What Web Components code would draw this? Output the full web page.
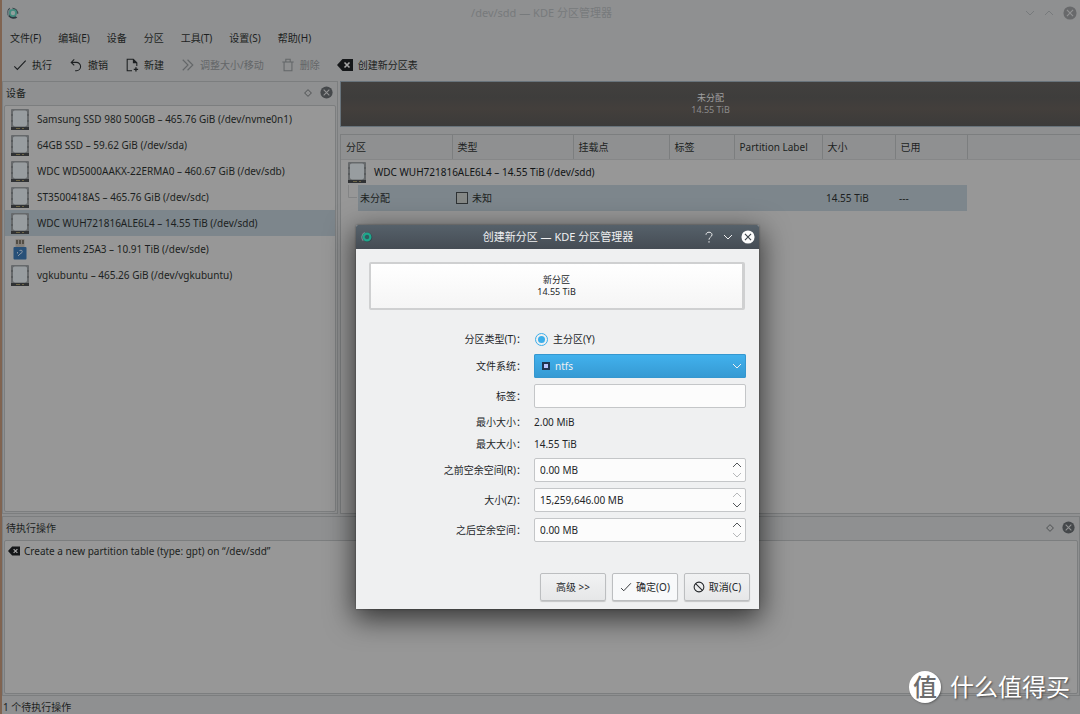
<!DOCTYPE html>
<html lang="zh-CN">
<head>
<meta charset="utf-8">
<title>KDE 分区管理器</title>
<style>
  body {
    margin: 0;
    background: #8f9091;
    color: #1c1f21;
    font: 10px/16px "Noto Sans", "Noto Sans CJK SC", sans-serif;
    overflow: hidden;
    --window: #8f9091;
    --view: #979797;
    --line: #7c7e7f;
    --selected: #7d868c;
    --muted: #636668;
  }
</style>
</head>
<body>
<partition-manager></partition-manager>
<script>
const icons = {
  app: ['0 0 16 16', '<path d="M4 2A7 7 0 0 0 13 13L10 11A4 4 0 0 1 5 5Z" fill="#2c3940"/><path d="M3 12A7 7 0 0 1 4 3L6 5Z" fill="#6f7c80"/><path d="M7 2A6.500 6.500 0 0 1 14 9L11 8Z" fill="#3c494d"/><circle cx="8" cy="8" r="3.500" fill="#8fa09d" stroke="#438b7e" stroke-width="2"/>'],
  appLit: ['0 0 16 16', '<circle cx="8.500" cy="8.500" r="6.500" fill="#34444d"/><path d="M3 13A7 7 0 0 1 5 2" stroke="#7c8a92" stroke-width="1.500" fill="none"/><circle cx="8" cy="8" r="4.500" fill="#315d60" stroke="#1fa88c" stroke-width="3"/>'],
  check: ['0 0 16 16', '<path d="M1.500 9.500 5 13 14.500 3" fill="none" stroke="currentColor" stroke-width="1.200"/>'],
  undo: ['0 0 16 16', '<path d="M6 1.500 2.500 5 6 8.500M2.500 5H8.500A4.500 4.500 0 0 1 8.500 14.500H7" fill="none" stroke="currentColor" stroke-width="1.200"/>'],
  file: ['0 0 16 16', '<path d="M8 14.500H2.500V1.500H9.500L13.500 5.500V9" fill="none" stroke="currentColor" stroke-width="1.200"/><path d="M9 1V6H14Z" fill="currentColor"/><path d="M12.500 10.500V15.500M10 13H15" stroke="currentColor" stroke-width="1.500"/>'],
  resize: ['0 0 16 16', '<path d="M2 2 8 8 2 14M7.500 2 13.500 8 7.500 14" fill="none" stroke="currentColor" stroke-width="1.300"/>'],
  trash: ['0 0 16 16', '<path d="M1.500 4.500H14.500M5.500 4V1.500H10.500V4M3.500 5V14.500H12.500V5" fill="none" stroke="currentColor" stroke-width="1.200"/>'],
  clear: ['0 0 16 16', '<path d="M5.500 2H16V14H5.500L0 8Z" fill="#151719"/><path d="M7.500 5.500 12.500 10.500M12.500 5.500 7.500 10.500" stroke="#a8a8a8" stroke-width="1.600"/>'],
  diamond: ['0 0 16 16', '<path d="M8 3.500 12.500 8 8 12.500 3.500 8Z" fill="none" stroke="currentColor" stroke-width="1.300"/>'],
  close: ['0 0 16 16', '<circle cx="8" cy="8" r="7.500" fill="currentColor"/><path d="M4.500 4.500 11.500 11.500M11.500 4.500 4.500 11.500" stroke="var(--cross, #929394)" stroke-width="1.300"/>'],
  down: ['0 0 10 10', '<path d="M1 3 5 7 9 3" fill="none" stroke="currentColor" stroke-width="1"/>'],
  up: ['0 0 10 10', '<path d="M1 7 5 3 9 7" fill="none" stroke="currentColor" stroke-width="1"/>'],
  help: ['0 0 16 16', '<path d="M4 5C4 .5 12 .5 12 5C12 8 8 8 8 11.500M8 13.500V15.500" fill="none" stroke="currentColor" stroke-width="1.300"/>'],
  cancel: ['0 0 16 16', '<circle cx="8" cy="8" r="6.500" fill="none" stroke="currentColor" stroke-width="1.400"/><path d="M3.500 3.500 12.500 12.500" stroke="currentColor" stroke-width="1.400"/>'],
  disk: ['0 0 18 21', '<rect width="18" height="21" rx="1" fill="#66696b"/><rect y="18" width="18" height="3" fill="#303234"/><path d="M4 1.500H14Q16.500 1.500 16 4V14Q16.500 17 14 17.500H4Q1.500 17 2 14V4Q1.500 1.500 4 1.500Z" fill="#989da0"/><path d="M1 5V7M1 11V13M17 5V7M17 11V13" stroke="#4b4e50" stroke-width="1"/><path d="M5 19.500H9M11 19.500H13" stroke="#6d6547" stroke-width="1"/>'],
  usb: ['0 0 18 21', '<path d="M4.500 0H13.500V9H4.500Z" fill="#85807a"/><path d="M6 1V5M9 1V5M12 1V5" stroke="#423d35" stroke-width="1.500"/><rect x="2.500" y="8" width="13" height="12.500" rx="1" fill="#285078"/><path d="M7 17 9 15M8.500 11.500Q12 10.500 11 13.500L9 15M6.500 13V14.500" fill="none" stroke="#8997a5" stroke-width="1"/>']
};

function define(name, html, setup) {
  const template = document.createElement('template');
  template.innerHTML = '<style>*{box-sizing:border-box}button,input,select{font:inherit;color:inherit;margin:0}button{background:none;border:0;padding:0}</style>' + html;
  customElements.define(name, class extends HTMLElement {
    constructor() {
      super();
      this.attachShadow({ mode: 'open' }).append(template.content.cloneNode(true));
    }
    connectedCallback() { if (setup) setup(this, this.shadowRoot); }
  });
}

define('k-icon', `<style>
  :host{display:inline-flex;flex:none;width:12px;height:12px}
  svg{width:100%;height:100%;display:block}
</style><svg aria-hidden="true"></svg>`, (host, root) => {
  const [box, body] = icons[host.getAttribute('name')];
  const svg = root.querySelector('svg');
  svg.setAttribute('viewBox', box);
  svg.innerHTML = body;
});

define('title-bar', `<style>
  :host{display:grid;grid-template-columns:60px 1fr 60px;align-items:center;height:25px;padding:0 3px 0 4px;color:#777a7c;font-size:11px}
  .app{width:14px;height:14px}
  h1{margin:0;font-size:inherit;font-weight:400;text-align:center}
  .controls{display:flex;gap:9px;justify-content:flex-end;align-items:center}
  button{display:flex}
  .small{width:10px;height:10px}
  .close{width:14px;height:14px;color:#68696b}
</style>
<k-icon class="app" name="app"></k-icon>
<h1>/dev/sdd — KDE 分区管理器</h1>
<div class="controls">
  <button aria-label="最小化"><k-icon class="small" name="down"></k-icon></button>
  <button aria-label="最大化"><k-icon class="small" name="up"></k-icon></button>
  <button aria-label="关闭"><k-icon class="close" name="close"></k-icon></button>
</div>`);

define('menu-bar', `<style>
  :host{display:flex;gap:17px;align-items:center;height:26px;padding-left:8px}
</style>
<button>文件(F)</button><button>编辑(E)</button><button>设备</button><button>分区</button><button>工具(T)</button><button>设置(S)</button><button>帮助(H)</button>`);

define('tool-button', `<style>
  :host{display:block}
  button{display:flex;align-items:center;gap:5px}
  :host([disabled]) button{color:var(--muted)}
</style><button><span><slot></slot></span></button>`, (host, root) => {
  const button = root.querySelector('button');
  button.disabled = host.hasAttribute('disabled');
  const icon = document.createElement('k-icon');
  icon.setAttribute('name', host.getAttribute('icon'));
  icon.style.width = icon.style.height = host.getAttribute('icon') === 'clear' ? '16px' : '14px';
  button.prepend(icon);
});

define('tool-row', `<style>
  :host{display:flex;gap:17px;align-items:center;box-sizing:border-box;height:30px;padding:0 0 2px 11px}
</style>
<tool-button icon="check">执行</tool-button>
<tool-button icon="undo">撤销</tool-button>
<tool-button icon="file">新建</tool-button>
<tool-button icon="resize" disabled>调整大小/移动</tool-button>
<tool-button icon="trash" disabled>删除</tool-button>
<tool-button icon="clear">创建新分区表</tool-button>`);

define('dock-panel', `<style>
  :host{display:flex;flex-direction:column;border:1px solid var(--line);padding:0 1px 1px}
  header{display:flex;align-items:center;height:23px;padding:0 3px 2px 2px}
  h2{margin:0 auto 0 0;font-size:inherit;font-weight:400}
  button{display:flex;margin-left:6px}
  .float{width:12px;height:12px;color:#4b4e50}
  .close{width:13px;height:13px;color:#45484b}
  .view{flex:1;background:var(--view);border:1px solid var(--line);border-radius:2px}
</style>
<header><h2></h2>
  <button aria-label="浮动"><k-icon class="float" name="diamond"></k-icon></button>
  <button aria-label="关闭"><k-icon class="close" name="close"></k-icon></button>
</header>
<div class="view"><slot></slot></div>`, (host, root) => {
  root.querySelector('h2').textContent = host.getAttribute('heading');
});

define('device-item', `<style>
  :host{display:flex;align-items:center;gap:8px;height:26px;padding-left:6px}
  :host([selected]){background:var(--selected)}
  k-icon{width:18px;height:21px}
</style><span><slot></slot></span>`, (host, root) => {
  const icon = document.createElement('k-icon');
  icon.setAttribute('name', host.getAttribute('icon') || 'disk');
  root.querySelector('span').before(icon);
});

define('partition-bar', `<style>
  :host{display:flex;flex-direction:column;justify-content:center;align-items:center;height:46px;font-size:9px;line-height:12px;
    color:#8c8c8c;border:1px solid #68737b;border-right:0;background:linear-gradient(#42403e,#3e3d3c 35%,#433f3c 60%,#3c3b3a)}
  b{font-weight:400;color:#a0a0a0}
</style><b>未分配</b><span>14.55 TiB</span>`);

define('partition-table', `<style>
  :host{display:block;background:var(--view);border:1px solid var(--line);border-right:0}
  table{width:100%;table-layout:fixed;border-collapse:collapse}
  th,td{padding:0 0 0 4px;text-align:left;font-weight:400;white-space:nowrap}
  thead tr{height:24px;background:var(--window)}
  th{border-right:1px solid var(--line);border-bottom:1px solid #868788;padding-left:5px}
  th:last-child{border-right:0}
  tbody tr{height:26px}
  .device{padding-left:7px;color:#111416}
  .line{display:flex;align-items:center;gap:8px}
  .line.first{gap:2px}
  .line.type{gap:4px}
  .disk{width:18px;height:21px}
  .selected td{background:var(--selected)}
  .selected td:first-child{padding-left:0;background:linear-gradient(90deg,transparent 17px,var(--selected) 17px)}
  .selected td:last-child{background:none}
  .box{width:12px;height:12px;background:#858886;border:1px solid #2e3234}
  .branch{flex:none;width:17px;height:26px}
</style>
<table>
  <colgroup><col style="width:111px"><col style="width:121px"><col style="width:96px"><col style="width:65px"><col style="width:88px"><col style="width:73px"><col style="width:72px"><col></colgroup>
  <thead><tr><th>分区</th><th>类型</th><th>挂载点</th><th>标签</th><th>Partition Label</th><th>大小</th><th>已用</th><th></th></tr></thead>
  <tbody>
    <tr><td class="device" colspan="8"><div class="line"><k-icon class="disk" name="disk"></k-icon>WDC WUH721816ALE6L4 – 14.55 TiB (/dev/sdd)</div></td></tr>
    <tr class="selected"><td><div class="line first"><svg class="branch" viewBox="0 0 17 26" aria-hidden="true"><path d="M7.500 0V12.500H16" fill="none" stroke="#838485"/></svg>未分配</div></td>
      <td><div class="line type"><span class="box"></span>未知</div></td><td></td><td></td><td></td><td>14.55 TiB</td><td>---</td><td></td></tr>
  </tbody>
</table>`);

define('pending-item', `<style>
  :host{display:flex;align-items:center;gap:4px;height:20px;padding-left:3px}
</style><k-icon name="clear"></k-icon><span><slot></slot></span>`);

define('spin-box', `<style>
  :host{display:flex;height:24px;box-sizing:border-box;background:#fcfcfc;border:1px solid #c4c6c8;border-radius:2px}
  input{flex:1;min-width:0;border:0;background:none;padding:0 5px;outline:0}
  div{display:flex;flex-direction:column;justify-content:center;padding-right:3px}
  button{display:flex;color:#53575a}
  button:disabled{color:#b6b8ba}
</style><input><div>
  <button aria-label="增加"><k-icon name="up" style="width:10px;height:10px"></k-icon></button>
  <button aria-label="减少"><k-icon name="down" style="width:10px;height:10px"></k-icon></button>
</div>`, (host, root) => {
  const input = root.querySelector('input');
  input.value = host.getAttribute('value');
  input.setAttribute('aria-label', host.getAttribute('label'));
  root.querySelectorAll('button')[host.getAttribute('limit') === 'max' ? 0 : 1].disabled = true;
});

define('create-dialog', `<style>
  :host{display:block;color:#232629;background:#eff0f1;border-radius:2px 2px 0 0;box-shadow:0 0 2px rgba(0,0,0,.5),0 8px 28px 2px rgba(0,0,0,.65)}
  header{display:grid;grid-template-columns:60px 1fr 60px;align-items:center;height:24px;padding:0 4px 0 5px;color:#eff0f1;background:linear-gradient(#56616a,#454c54);border-radius:2px 2px 0 0;font-size:11px}
  header > k-icon{width:12px;height:12px}
  h2{margin:0;font-size:inherit;font-weight:400;text-align:center}
  .controls{display:flex;gap:8px;justify-content:flex-end;align-items:center}
  .controls button{display:flex}
  .controls .close{width:14px;height:14px;--cross:#3b434a;color:#fcfcfc}
  .controls .small{width:10px;height:10px}
  .preview{display:flex;flex-direction:column;align-items:center;justify-content:center;height:48px;margin:13px 14px 20px 13px;border:2px solid #cfd0d1;border-right-width:3px;border-radius:2px;background:linear-gradient(#fff,#f5f5f5);font-size:9px;line-height:12px}
  form{display:grid;grid-template-columns:1fr 212px;column-gap:8px;row-gap:6px;align-items:center;padding:0 13px}
  form > label,form > .name{text-align:right}
  .radio{display:flex;align-items:center;gap:5px;height:18px;padding-left:1px}
  input[type=radio]{appearance:none;width:13px;height:13px;padding:2px;border:1px solid #3daee9;border-radius:50%;background:#3daee9 content-box}
  .select{display:grid;align-items:center;height:24px;border-radius:2px;background:linear-gradient(#42b2ee,#3599d2);box-shadow:inset 0 0 0 1px #3597cf;color:#eff0f1}
  .select > *{grid-area:1/1}
  select{appearance:none;width:100%;height:24px;background:none;border:0;padding:0 21px;outline:0}
  .mark{width:8px;height:8px;margin-left:8px;border:2px solid #20354f;background:#b9c4fa}
  .arrow{width:10px;height:10px;justify-self:end;margin-right:4px}
  input.text{width:100%;height:24px;border:1px solid #c4c6c8;border-radius:2px;background:#fcfcfc;padding:0 5px}
  footer{display:flex;justify-content:flex-end;gap:6px;padding:31px 9px 8px}
  footer button{display:flex;align-items:center;justify-content:center;gap:4px;width:66px;height:28px;border:1px solid #bcbec0;border-radius:2px;background:linear-gradient(#f1f2f3,#e6e7e8);box-shadow:0 1px 1px rgba(0,0,0,.18)}
  footer .ok{background:#f8f9fa}
</style>
<header><k-icon name="appLit"></k-icon><h2>创建新分区 — KDE 分区管理器</h2>
  <div class="controls"><button aria-label="帮助"><k-icon name="help"></k-icon></button><button aria-label="收起"><k-icon class="small" name="down"></k-icon></button><button aria-label="关闭"><k-icon class="close" name="close"></k-icon></button></div>
</header>
<div class="preview"><span>新分区</span><span>14.55 TiB</span></div>
<form>
  <span class="name">分区类型(T)：</span><label class="radio"><input type="radio" name="kind" checked>主分区(Y)</label>
  <label for="fs">文件系统：</label><div class="select"><span class="mark"></span><select id="fs"><option>ntfs</option></select><k-icon class="arrow" name="down"></k-icon></div>
  <label for="label">标签：</label><input class="text" id="label" type="text">
  <span class="name">最小大小：</span><span>2.00 MiB</span>
  <span class="name">最大大小：</span><span>14.55 TiB</span>
  <span class="name">之前空余空间(R)：</span><spin-box value="0.00 MB" label="之前空余空间"></spin-box>
  <span class="name">大小(Z)：</span><spin-box value="15,259,646.00 MB" label="大小" limit="max"></spin-box>
  <span class="name">之后空余空间：</span><spin-box value="0.00 MB" label="之后空余空间"></spin-box>
</form>
<footer><button>高级 &gt;&gt;</button><button class="ok"><k-icon name="check"></k-icon>确定(O)</button><button><k-icon name="cancel"></k-icon>取消(C)</button></footer>`);

define('site-mark', `<style>
  :host{display:flex;align-items:center;gap:9px;color:#fff;font-size:24px;line-height:32px;text-shadow:1px 1px 2px rgba(0,0,0,.5)}
  .seal{display:grid;place-items:center;width:32px;height:32px;border-radius:50%;background:#fff;color:#6c6c6c;text-shadow:none;font-weight:500;box-shadow:1px 1px 2px rgba(0,0,0,.3)}
</style><span class="seal">值</span><span>什么值得买</span>`);

define('partition-manager', `<style>
  :host{display:flex;flex-direction:column;position:relative;min-height:100vh;border-left:2px solid #806451}
  main{flex:1;display:grid;grid-template-columns:336px 1fr;column-gap:1px}
  .right{display:flex;flex-direction:column;gap:7px;padding-left:1px}
  partition-table{flex:1}
  .pending{height:180px;margin-top:2px}
  footer{height:18px;padding:3px 1px 0;line-height:16px}
  create-dialog{position:absolute;left:354px;top:225px;width:403px}
  site-mark{position:absolute;right:10px;bottom:11px}
</style>
<title-bar></title-bar>
<menu-bar></menu-bar>
<tool-row></tool-row>
<main>
  <dock-panel heading="设备">
    <device-item>Samsung SSD 980 500GB – 465.76 GiB (/dev/nvme0n1)</device-item>
    <device-item>64GB SSD – 59.62 GiB (/dev/sda)</device-item>
    <device-item>WDC WD5000AAKX-22ERMA0 – 460.67 GiB (/dev/sdb)</device-item>
    <device-item>ST3500418AS – 465.76 GiB (/dev/sdc)</device-item>
    <device-item selected>WDC WUH721816ALE6L4 – 14.55 TiB (/dev/sdd)</device-item>
    <device-item icon="usb">Elements 25A3 – 10.91 TiB (/dev/sde)</device-item>
    <device-item>vgkubuntu – 465.26 GiB (/dev/vgkubuntu)</device-item>
  </dock-panel>
  <div class="right"><partition-bar></partition-bar><partition-table></partition-table></div>
</main>
<dock-panel class="pending" heading="待执行操作">
  <pending-item>Create a new partition table (type: gpt) on “/dev/sdd”</pending-item>
</dock-panel>
<footer>1 个待执行操作</footer>
<create-dialog role="dialog" aria-label="创建新分区"></create-dialog>
<site-mark></site-mark>`);
</script>
</body>
</html>
